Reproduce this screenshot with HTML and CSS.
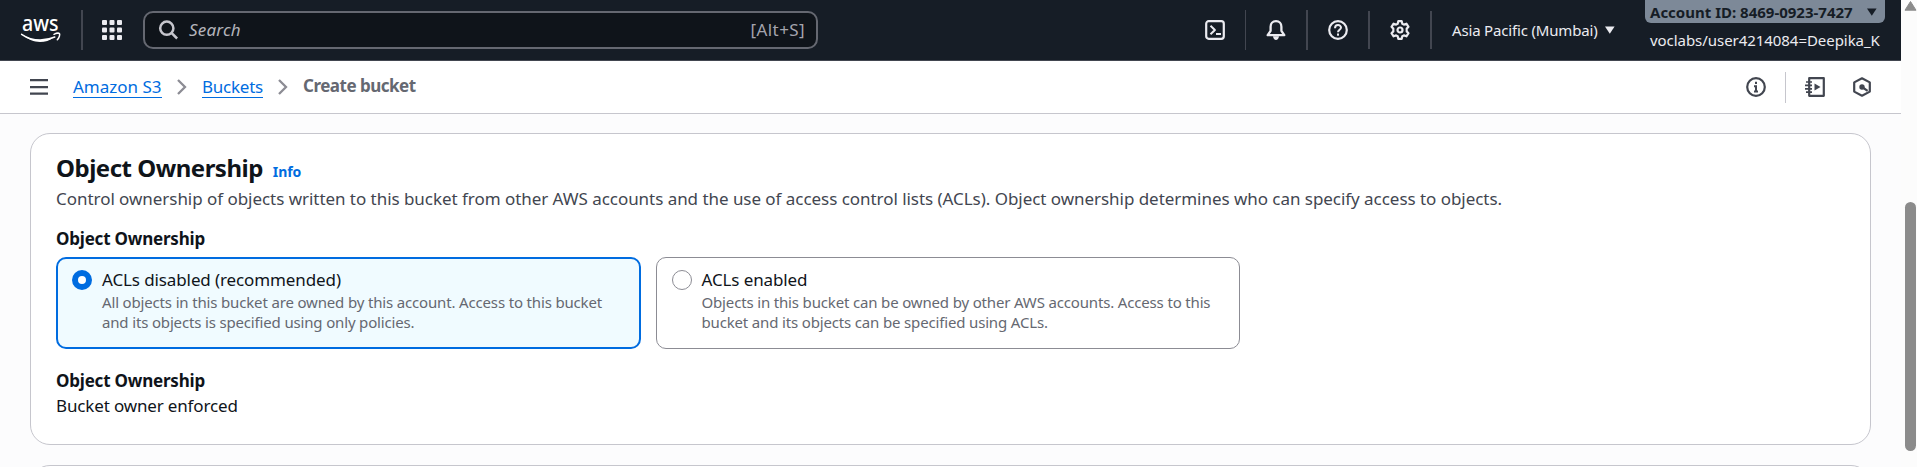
FILE: index.html
```
<!DOCTYPE html>
<html lang="en">
<head>
<meta charset="utf-8">
<title>Create bucket</title>
<link rel="stylesheet" href="styles.css">
</head>
<body>
<div class="page">
  <div class="main">
    <header class="topbar">
      <svg class="logo" width="40" height="26" viewBox="0 0 40 26">
        <text class="logo-text" x="1" y="13.8" textLength="36.500" lengthAdjust="spacingAndGlyphs">aws</text>
        <path d="M.6 17.300c5.600 3.900 12 5.700 18.600 5.700 5.200 0 10.200-1.100 14.600-3" fill="none" stroke="#fff" stroke-width="1.500" stroke-linecap="round"/>
        <path d="M3 18.600c5.300 3.300 10.500 4.400 16 4.400 5 0 9.600-1 13.500-2.600-3.500 2.900-8.500 4.600-13.500 4.600-6.200 0-11.700-2.400-16-6.400z" fill="#fff"/>
        <path d="M33 17.300c2.400-1.200 5-1.200 5.500-.6.500.8-.1 4.100-2.200 6.100" fill="none" stroke="#fff" stroke-width="1.500" stroke-linecap="round"/>
      </svg>
      <span class="rule rule-logo"></span>
      <svg class="apps" width="20" height="20" viewBox="0 0 20 20" fill="#ebebf0">
        <rect x="0" y="0" width="5" height="5" rx="1"/><rect x="7.500" y="0" width="5" height="5" rx="1"/><rect x="15" y="0" width="5" height="5" rx="1"/>
        <rect x="0" y="7.500" width="5" height="5" rx="1"/><rect x="7.500" y="7.500" width="5" height="5" rx="1"/><rect x="15" y="7.500" width="5" height="5" rx="1"/>
        <rect x="0" y="15" width="5" height="5" rx="1"/><rect x="7.500" y="15" width="5" height="5" rx="1"/><rect x="15" y="15" width="5" height="5" rx="1"/>
      </svg>
      <div class="search">
        <svg width="20" height="20" viewBox="0 0 20 20" fill="none" stroke="#c6c6cd" stroke-width="2.500"><circle cx="7.800" cy="8.200" r="6.600"/><path d="M12.500 12.900l5.600 5.600"/></svg>
        <span class="search-hint">Search</span>
        <span class="search-key">[Alt+S]</span>
      </div>
      <div class="tools">
        <svg width="20" height="20" viewBox="0 0 20 20" fill="none" stroke="#ebebf0" stroke-width="2.200" stroke-linejoin="round"><rect x="1.200" y="1.200" width="17.600" height="17.600" rx="2.500"/><path d="M5.500 5.800l4.400 4.200-4.400 4.200M11 14.100h5" stroke-width="2"/></svg>
        <span class="rule rule-thin"></span>
        <svg width="20" height="20" viewBox="0 0 20 20" fill="none" stroke="#ebebf0" stroke-width="2.300" stroke-linejoin="round"><path d="M10 1.200c-3.400 0-5.400 2.300-5.400 5.500v4.100L1.700 15.200h16.600l-2.900-4.400V6.700c0-3.200-2-5.500-5.400-5.500z"/><path d="M7 16.300c.4 4.900 5.600 4.900 6 0z" fill="#ebebf0" stroke="none"/></svg>
        <span class="rule"></span>
        <svg width="20" height="20" viewBox="0 0 20 20" fill="none" stroke="#ebebf0" stroke-width="2.200"><circle cx="10" cy="10" r="8.800"/><path d="M7 8.200c0-4.100 6-4 6-.6 0 2.200-3 2.200-3 4.700" stroke-width="2"/><rect x="9" y="13.500" width="2" height="2.200" fill="#ebebf0" stroke="none"/></svg>
        <span class="rule rule-short"></span>
        <svg width="20" height="20" viewBox="0 0 20 20" fill="none" stroke="#ebebf0" stroke-width="2.200" stroke-linejoin="round"><path d="M8.300 1.200h3.400l.6 2.500 1.600.9 2.500-.9 2.100 3.100L16.700 8.600v2.800l1.800 1.800-2.100 3.100-2.500-.9-1.600.9-.6 2.500H8.300l-.6-2.500-1.600-.9-2.500.9-2.100-3.100 1.800-1.800V8.600L1.500 6.800l2.100-3.100 2.500.9 1.600-.9z"/><circle cx="10" cy="10" r="2.500"/></svg>
        <span class="rule rule-short"></span>
      </div>
      <div class="region"><span class="region-name">Asia Pacific (Mumbai)</span><svg width="10" height="8" viewBox="0 0 10 8"><path d="M0 .5h9.600L4.800 7.800z" fill="#ebebf0"/></svg></div>
      <div class="account">
        <div class="account-id"><span>Account ID: 8469-0923-7427</span><svg width="10" height="8" viewBox="0 0 10 8"><path d="M0 .5h9.600L4.800 7.800z" fill="#161d26"/></svg></div>
        <div class="account-user">voclabs/user4214084=Deepika_K</div>
      </div>
    </header>
    <nav class="crumbs">
      <svg class="menu" width="18" height="16" viewBox="0 0 18 16" fill="#424650"><path d="M0 0h18v2.200H0zM0 7h18v2.200H0zM0 13.500h18v2.200H0z"/></svg>
      <a class="crumb crumb-s3">Amazon S3</a>
      <svg class="chevron" width="10" height="16" viewBox="0 0 10 16"><path d="M1 1l7 7-7 7" fill="none" stroke="#8c8c94" stroke-width="2.300"/></svg>
      <a class="crumb crumb-buckets">Buckets</a>
      <svg class="chevron" width="10" height="16" viewBox="0 0 10 16"><path d="M1 1l7 7-7 7" fill="none" stroke="#8c8c94" stroke-width="2.300"/></svg>
      <span class="crumb-current">Create bucket</span>
      <div class="panel-tools">
        <svg width="20" height="20" viewBox="0 0 20 20" fill="none" stroke="#424650" stroke-width="2.200"><circle cx="10" cy="10" r="8.800"/><path d="M10 4.800v2.200M8 9.200h2v5.500M8 14.500h4" stroke-width="2"/></svg>
        <span class="panel-rule"></span>
        <svg width="20" height="20" viewBox="0 0 20 20" fill="none" stroke="#424650" stroke-width="2.200" stroke-linejoin="round"><path d="M4.200 1.200h14.600v17.600H4.200z"/><path d="M1 5h6M0 8.400h7M0 11.800h7M1 15.100h6" stroke-width="1.700"/><path d="M9.500 6.500l6 3.500-6 3.500z" fill="#424650" stroke="none"/></svg>
        <svg class="hex" width="18" height="20" viewBox="0 0 18 20" fill="none" stroke="#424650" stroke-width="2.200" stroke-linejoin="round"><path d="M9 1.300l7.800 4.100v9.200L9 18.700l-7.800-4.100V5.400z"/><path d="M9 10l5.600 3.800"/><circle cx="9" cy="10" r="2.700" fill="#424650" stroke="none"/></svg>
      </div>
    </nav>
    <main class="content">
      <section class="card">
        <div class="heading"><h2>Object Ownership</h2><a class="info">Info</a></div>
        <p class="description">Control ownership of objects written to this bucket from other AWS accounts and the use of access control lists (ACLs). Object ownership determines who can specify access to objects.</p>
        <div class="label">Object Ownership</div>
        <div class="tiles">
          <div class="tile tile-selected">
            <span class="radio radio-on"></span>
            <div><div class="tile-title">ACLs disabled (recommended)</div><div class="tile-text">All objects in this bucket are owned by this account. Access to this bucket<br>and its objects is specified using only policies.</div></div>
          </div>
          <div class="tile">
            <span class="radio"></span>
            <div><div class="tile-title">ACLs enabled</div><div class="tile-text">Objects in this bucket can be owned by other AWS accounts. Access to this<br>bucket and its objects can be specified using ACLs.</div></div>
          </div>
        </div>
        <div class="label label-value">Object Ownership</div>
        <div class="value">Bucket owner enforced</div>
      </section>
      <section class="card card-next"></section>
    </main>
  </div>
  <aside class="scrollbar">
    <svg width="13" height="10" viewBox="0 0 13 10"><path d="M6.500.5L12 9.200H1z" fill="#8b8b8b" stroke="#8b8b8b" stroke-linejoin="round"/></svg>
    <span class="thumb"></span>
  </aside>
</div>
</body>
</html>
```
FILE: styles.css
```
* { box-sizing: border-box; }
body {
  margin: 0;
  font-family: "Noto Sans", "Open Sans", sans-serif;
  font-size: 17px;
  line-height: 25px;
  color: #0f141a;
  background: #fcfcfd;
  overflow: hidden;
}
svg { display: block; flex: none; overflow: visible; }
h2, p { margin: 0; }
.page { display: flex; height: 467px; overflow: hidden; }
.main { width: 1901px; flex: none; }

.topbar {
  display: flex;
  align-items: center;
  height: 61px;
  background: #161d26;
  border-bottom: 1px solid #424650;
  white-space: nowrap;
}
.logo { margin-left: 21px; }
.logo-text { font-size: 22px; font-weight: 500; fill: #fff; }
.rule { width: 2px; height: 40px; background: #424650; flex: none; }
.rule-thin { width: 1px; }
.rule-short { height: 38px; }
.rule-logo { margin-left: 20px; }
.apps { margin-left: 19px; }
.search {
  display: flex;
  align-items: center;
  width: 675px;
  height: 38px;
  margin-left: 21px;
  padding: 0 11px 0 14px;
  border: 2px solid #656871;
  border-radius: 10px;
  background: #0f141a;
  color: #a4a4ad;
}
.search-hint { margin-left: 10px; font-style: italic; letter-spacing: 0.2px; color: #b4b4bb; position: relative; top: -1px; }
.search-key { margin-left: auto; letter-spacing: 0.4px; position: relative; top: -1px; }
.tools { display: flex; align-items: center; gap: 20px; margin-left: 387px; }
.region {
  display: flex;
  align-items: center;
  gap: 7px;
  margin-left: 20px;
  font-size: 15px;
  letter-spacing: -0.17px;
  color: #ebebf0;
}
.region-name { width: 146px; }
.account { align-self: flex-start; width: 240px; margin-left: auto; margin-right: 16px; font-size: 15px; }
.account-id {
  display: flex;
  align-items: center;
  gap: 14px;
  height: 23px;
  padding: 1px 0 0 5px;
  border-radius: 0 0 6px 6px;
  background: #7d8998;
  color: #161d26;
  font-weight: 700;
}
.account-user { padding: 5px 0 0 5px; letter-spacing: -0.05px; color: #ebebf0; }

.crumbs {
  display: flex;
  align-items: center;
  height: 53px;
  padding-left: 30px;
  border-bottom: 1px solid #c6c6cd;
  background: #fff;
}
.menu { margin-right: 25px; }
.crumb { height: 21px; line-height: 20px; border-bottom: 1px solid #006ce0; color: #006ce0; white-space: nowrap; }
.crumb-s3 { width: 89px; }
.crumb-buckets { width: 61px; letter-spacing: -0.25px; }
.chevron { margin: 0 15px; }
.crumb-current { padding-bottom: 3px; font-weight: 700; letter-spacing: -0.5px; color: #656871; }
.panel-tools { display: flex; align-items: center; margin-left: auto; margin-right: 30px; }
.panel-rule { width: 1px; height: 31px; margin: 0 19px; background: #c6c6cd; }
.hex { margin-left: 28px; }

.content { padding: 19px 0 0 30px; }
.card {
  width: 1841px;
  height: 312px;
  padding: 19px 25px 0;
  border: 1px solid #c6c6cd;
  border-radius: 20px;
  background: #fff;
}
.card-next { height: 60px; margin-top: 20px; }
.heading { display: flex; align-items: baseline; gap: 10px; height: 33px; line-height: 30px; }
h2 { font-size: 24px; font-weight: 700; letter-spacing: -0.5px; }
.info { font-size: 14px; font-weight: 700; letter-spacing: -0.1px; color: #006ce0; }
.description { letter-spacing: -0.043px; color: #424650; white-space: nowrap; }
.label { margin-top: 15px; font-weight: 700; letter-spacing: -0.2px; }
.tiles { display: flex; gap: 15px; margin-top: 6px; }
.tile {
  display: flex;
  gap: 10px;
  width: 584.5px;
  height: 92px;
  padding: 9px 15px 0;
  border: 1px solid #8c8c94;
  border-radius: 10px;
  white-space: nowrap;
}
.tile-selected { padding: 8px 14px 0; border: 2px solid #006ce0; background: #f0fbff; }
.radio { flex: none; width: 20px; height: 20px; margin-top: 3px; border: 1px solid #8c8c94; border-radius: 50%; background: #fff; }
.radio-on { border: 6px solid #006ce0; }
.tile-title { letter-spacing: -0.11px; }
.tile-text { font-size: 15px; line-height: 20px; letter-spacing: -0.16px; color: #656871; }
.label-value { margin-top: 19px; }
.value { letter-spacing: -0.15px; }

.scrollbar { width: 16px; padding: 1px 0 0 3px; background: #fcfcfc; }
.thumb { display: block; width: 11px; height: 249px; margin: 191px 0 0 1px; border-radius: 6px; background: #8b8b8b; }
```
